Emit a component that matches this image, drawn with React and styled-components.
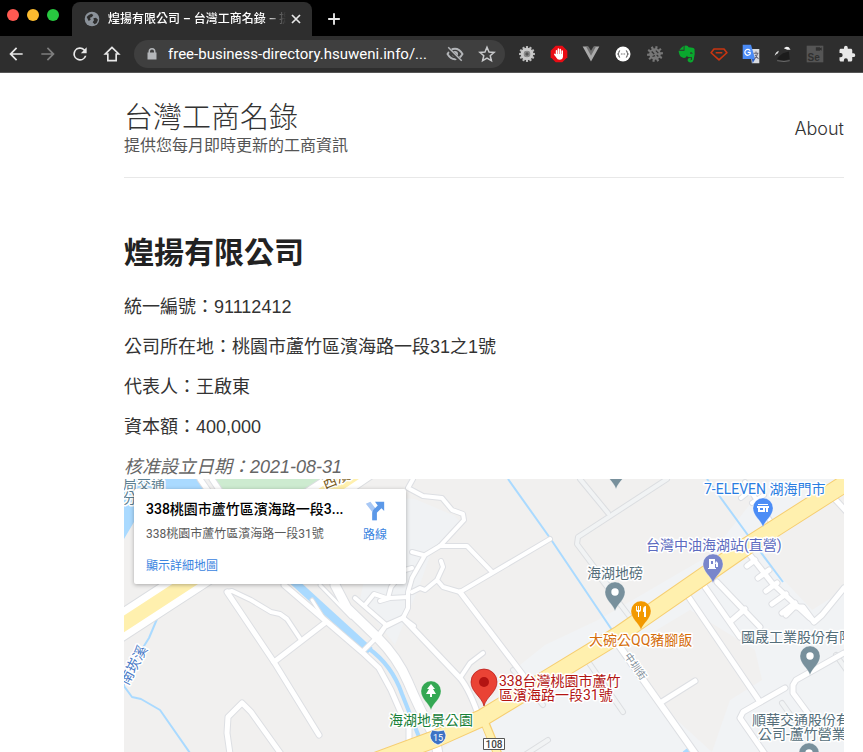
import React from "react";
import styled, { createGlobalStyle } from "styled-components";

const Global = createGlobalStyle`
  *, *::before, *::after { box-sizing: border-box; }
  html, body, #root { height: 100%; }
  body { margin: 0; background: #fff; overflow: hidden; }
`;

const UI_FONT = `Roboto, "Noto Sans CJK TC", sans-serif`;
const PAGE_FONT = `"Liberation Sans", "Noto Sans CJK TC", sans-serif`;

const Browser = styled.div`
  display: flex;
  flex-direction: column;
  height: 100vh;
  overflow: hidden;
  font-family: ${UI_FONT};
`;

/* ---------- tab strip ---------- */
const TabStrip = styled.div`
  display: flex;
  flex: none;
  height: 36px;
  background: #000;
`;
const WindowButtons = styled.div`
  display: flex;
  gap: 8px;
  width: 72px;
  padding: 9px 0 0 7px;
`;
const WindowButton = styled.button`
  width: 12px;
  height: 12px;
  padding: 0;
  border: 0;
  border-radius: 50%;
  background: ${(p) => p.$color};
`;
const Tab = styled.div`
  display: flex;
  align-items: center;
  width: 240px;
  height: 34px;
  margin-top: 2px;
  padding: 0 10px 0 12px;
  border-radius: 8px 8px 0 0;
  background: #2e2e2e;
  color: #fff;
`;
const TabTitle = styled.span`
  flex: 1;
  min-width: 0;
  margin: 0 4px 0 8px;
  overflow: hidden;
  white-space: nowrap;
  font-size: 12px;
  font-weight: 500;
  line-height: 18px;
  mask-image: linear-gradient(90deg, #000 88%, transparent);
`;
const IconButton = styled.button`
  display: flex;
  align-items: center;
  justify-content: center;
  flex: none;
  width: ${(p) => p.$size || 32}px;
  height: ${(p) => p.$size || 32}px;
  padding: 0;
  border: 0;
  background: none;
  color: ${(p) => (p.$dim ? "#7e7e7e" : "#e8e8e8")};
  svg { display: block; }
`;
const NewTab = styled(IconButton)`
  margin: 3px 0 0 6px;
`;

/* ---------- toolbar ---------- */
const Toolbar = styled.div`
  display: flex;
  flex: none;
  align-items: center;
  height: 37px;
  background: #2e2e2e;
  border-bottom: 1px solid #565656;
`;
const AddressBar = styled.label`
  display: flex;
  flex: 1;
  align-items: center;
  min-width: 0;
  height: 28px;
  margin: 0 6px;
  padding: 0 2px 0 12px;
  border-radius: 14px;
  background: #3f3f3f;
  color: #b4b6b9;
`;
const Url = styled.input`
  flex: 1;
  min-width: 0;
  margin-left: 10px;
  padding: 0;
  border: 0;
  outline: 0;
  background: none;
  color: #fff;
  font: 400 15px/20px ${UI_FONT};
`;
const Extensions = styled.div`
  display: flex;
  flex: none;
`;

/* ---------- page ---------- */
const Page = styled.div`
  flex: 1;
  min-height: 0;
  overflow: hidden;
  padding: 28px 19px 0 124px;
  background: #fff;
  color: #333;
  font-family: ${PAGE_FONT};
`;
const SiteHeader = styled.header`
  display: flex;
  align-items: center;
  justify-content: space-between;
  height: 77px;
  padding-bottom: 21px;
  border-bottom: 1px solid #e8e8e8;
`;
const SiteName = styled.div`
  color: #333;
  font-size: 29px;
  font-weight: 300;
  line-height: 34px;
`;
const Tagline = styled.div`
  color: #555;
  font-size: 16px;
  line-height: 22px;
`;
const NavLink = styled.a`
  color: #333;
  font: 300 18px/24px Inter, sans-serif;
  text-decoration: none;
`;
const Title = styled.h1`
  margin: 51px 0 16px;
  color: #222;
  font-size: 30px;
  font-weight: 700;
  line-height: 48px;
`;
const Fact = styled.p`
  margin: 0 0 12px;
  font-size: 18px;
  line-height: 28px;
`;
const Founded = styled.em`
  display: block;
  height: 26px;
  color: #666;
  font-size: 18px;
  line-height: 28px;
`;

/* ---------- map ---------- */
const MapFrame = styled.section`
  position: relative;
  height: 450px;
  overflow: hidden;
  background: #f1f0ef;
`;
const MapCanvas = styled.svg`
  display: block;
  width: 100%;
  height: 100%;
  font-family: ${UI_FONT};
`;
const PlaceCard = styled.div`
  position: absolute;
  top: 10px;
  left: 10px;
  display: flex;
  justify-content: space-between;
  width: 272px;
  height: 95px;
  padding: 9px 12px;
  border-radius: 2px;
  background: #fff;
  box-shadow: 0 1px 4px rgba(0, 0, 0, 0.3);
  font-family: ${UI_FONT};
  font-size: 12px;
`;
const PlaceInfo = styled.div`
  display: flex;
  flex-direction: column;
  width: 200px;
  white-space: nowrap;
`;
const PlaceName = styled.div`
  overflow: hidden;
  color: #000;
  font-size: 14px;
  font-weight: 500;
  line-height: 22px;
`;
const PlaceAddress = styled.div`
  margin: 6px 0 15px;
  color: #5b5b5b;
  line-height: 16px;
`;
const MapLink = styled.a`
  color: #3a84df;
  line-height: 18px;
  text-decoration: none;
`;
const Directions = styled(MapLink)`
  display: flex;
  flex-direction: column;
  align-items: center;
  gap: 4px;
  width: 38px;
  padding-top: 2px;
`;

const Label = styled.text`
  fill: ${(p) => p.$color};
  font-size: ${(p) => p.$size || 14}px;
  stroke: #fff;
  stroke-width: 3px;
  stroke-linejoin: round;
  paint-order: stroke;
`;

const whiteRoads = [
  ["M200 479 209 492M212 479 222 494", 5],
  ["M227 592 274 662 319 735", 5],
  ["M227 592 232 591 251 600 271 612 280 614 287 619 301 640", 4],
  ["M274 662 326 622", 5],
  ["M230 754 227 733 228 717 242 703 251 712 281 754", 5],
  ["M284 585 362 652 379 668 391 690 401 713 409 728 409 743", 5],
  ["M362 652 377 637 386 625 402 618", 4],
  ["M320 585 351 617M326 622 312 600", 3],
  ["M335 585 347 608 377 637Q398 658 408 682T435 738L438 754", 9],
  ["M355 598 385 624M365 605 374 594 386 598", 4],
  ["M413 479 408 488 423 496 442 498 452 510 463 514 464 520 440 546 425 555 412 578 408 592 408 608 403 618 385 627 379 636", 4],
  ["M440 546 467 546 492 572", 4],
  ["M550 539 460 592 443 587 437 580 443 567 441 561M437 580 425 590 420 588 412 592", 4],
  ["M460 592 523 675", 5],
  ["M403 618 460 678Q470 690 480 720", 5],
  ["M460 678 470 663 483 653", 4],
  ["M412 552 423 555M380 601 390 598 408 597M388 598 391 587 405 570 412 568", 4],
  ["M403 618 414 626", 4],
  ["M620 647 697 756", 6],
  ["M660 703 695 681", 5],
  ["M688 596 760 702", 5],
  ["M785 688 743 712 740 718 765 754", 5],
  ["M844 653 796 680 793 685 793 693 810 716", 5],
  ["M705 587 740 637M717 582 760 627M731 621 745 609", 5],
  ["M750 555 772 583 810 618M747 566 755 560M758 578 769 570M766 591 777 583M772 604 786 594M782 613 795 603", 5],
  ["M844 588 822 615 814 622 803 607 794 607 786 615", 5],
  ["M741 498 751 490 745 482M752 503 764 495M752 493 773 525", 4],
  ["M833 497 846 511", 5],
];
const greyRoads = [
  "M580 479 608 513M667 479 578 537 577 544 613 592M598 575 630 617",
  "M587 660 623 712M513 670 543 705M548 740 520 758",
  "M782 703 794 720M836 655 850 675",
];

function Roads() {
  return (
    <g fill="none" strokeLinecap="round" strokeLinejoin="round">
      {greyRoads.map((d) => <path key={d} d={d} stroke="#dcdee1" strokeWidth="6" />)}
      {greyRoads.map((d) => <path key={d + "f"} d={d} stroke="#f1f3f4" strokeWidth="4" />)}
      {whiteRoads.map(([d, w]) => <path key={d} d={d} stroke="#dddfe3" strokeWidth={w + 2} />)}
      {whiteRoads.map(([d, w]) => <path key={d + "f"} d={d} stroke="#fff" strokeWidth={w} />)}
    </g>
  );
}

function Pin({ x, y, color, children }) {
  return (
    <g transform={`translate(${x} ${y})`}>
      <path d="M0 19C-2 12-10 8-10 0A10 10 0 0 1 10 0C10 8 2 12 0 19Z" fill={color} stroke="#fff" strokeOpacity=".5" strokeWidth=".5" />
      {children || <circle r="3.7" fill="#fff" />}
    </g>
  );
}

function MapDrawing() {
  return (
    <MapCanvas viewBox="124 479 720 450" preserveAspectRatio="xMidYMin slice" role="img" aria-label="地圖">
      <path d="M124 479H844V930H124Z" fill="#f1f0ef" />
      <path d="M381 497 415 499 455 516 462 524 430 556 418 590 409 610 395 645 360 600Z" fill="#f0f2f4" />
      <path d="M600 619 710 555 770 479H844V485L767 538 844 520V930H500L440 752 470 725 520 665 545 645Z" fill="#f1f3f5" />
      <path d="M640 640 690 610 755 650 762 680 730 700 712 752 655 700 620 650Z" fill="#f1f0ef" />
      <path d="M765 535 844 500V590L812 610 760 555Z" fill="#f1f0ef" />
      <path d="M124 479H201L210 492 134 522 124 539Z" fill="#aadaff" />
      <path d="M215 479H325L300 495H224Z" fill="#cdebd0" />
      <g fill="none" stroke="#aadaff" strokeLinejoin="round">
        <path d="M158 610 157 619 149 638 124 678V686L132 697 141 699 160 710 190 753" strokeWidth="2" />
        <path d="M290 578 370 651" strokeWidth="8" />
        <path d="M368 648Q392 665 402 694L421 742" strokeWidth="4" />
        <path d="M508 479 550 538 612 630M707 479 750 538 783 582" strokeWidth="2" />
        <path d="M684 753 692 747" strokeWidth="4" />
      </g>
      <Roads />
      <g fill="none">
        <path d="M110 633 345 480 370 463" stroke="#dcdee1" strokeWidth="30" />
        <path d="M110 633 345 480 370 463" stroke="#fff" strokeWidth="28" />
        <path d="M110 633 345 480 370 463" stroke="#fff0ae" strokeWidth="14" />
        <path d="M483 718 499 757" stroke="#f6ce72" strokeWidth="9" />
        <path d="M370 763 435 739 482 718 620 634 747 546 860 474" stroke="#f6ce72" strokeWidth="18" />
        <path d="M370 763 435 739 482 718 620 634 747 546 860 474" stroke="#fff0ae" strokeWidth="16" />
        <path d="M481 714 499 757" stroke="#fff0ae" strokeWidth="7" />
      </g>

      <Label x="123" y="489" $color="#5c7f92">局交通</Label>
      <Label x="123" y="503" $color="#5c7f92">分</Label>
      <Label x="325" y="489" $color="#795a20" transform="rotate(-22 325 489)">西濱路</Label>
      <Label x="128" y="686" $color="#4879c6" transform="rotate(-62 128 686)">南崁溪</Label>
      <Label x="624" y="656" $color="#7b8a96" $size={10} transform="rotate(55 624 656)">中圳街</Label>

      <Pin x={616} y={470} color="#78909c" />
      <Pin x={763} y={508} color="#4c8df6">
        <path d="M-5-4H5V-3H-5ZM-6-2H6V0H5V4H-5V0H-6ZM-3 0V2H0V0ZM2 0V4H3V0Z" fill="#fff" fillRule="evenodd" />
      </Pin>
      <Pin x={713} y={564} color="#7986cb">
        <path d="M-4-5H2V4H3V5H-5V4H-4ZM-2-3V0H0V-3ZM3-3 5-1V3H3V0H2" fill="#fff" fillRule="evenodd" />
      </Pin>
      <Pin x={615} y={592} color="#78909c" />
      <Pin x={641} y={611} color="#f29900">
        <path d="M-5-5V-1Q-5 1-3 1V6H-2V1Q0 1 0-1V-5H-1V-1H-2V-5H-3V-1H-4V-5ZM5-5Q2-5 2-1V1H3V6H5Z" fill="#fff" />
      </Pin>
      <Pin x={810} y={656} color="#78909c" />
      <Pin x={809} y={753} color="#78909c" />
      <Pin x={431} y={691} color="#34a853">
        <path d="M0-7 4-2H2L5 3H1V6H-1V3H-5L-2-2H-4Z" fill="#fff" />
      </Pin>
      <path d="M484 706C482 697 471 692 471 682A13 13 0 0 1 497 682C497 692 486 697 484 706Z" fill="#ea4335" stroke="#b31412" strokeWidth=".7" />
      <circle cx="484" cy="682" r="5" fill="#b31412" />

      <Label x="704" y="494" $color="#2a7de1">7-ELEVEN 湖海門市</Label>
      <Label x="646" y="550" $color="#5c6bc0">台灣中油海湖站(直營)</Label>
      <Label x="587" y="578" $color="#546e7a">海湖地磅</Label>
      <Label x="589" y="645" $color="#d56e0c">大碗公QQ豬腳飯</Label>
      <Label x="741" y="642" $color="#546e7a">國晟工業股份有限公司</Label>
      <Label x="752" y="725" $color="#546e7a">順華交通股份有限</Label>
      <Label x="758" y="739" $color="#546e7a">公司-蘆竹營業所</Label>
      <Label x="389" y="725" $color="#188038">海湖地景公園</Label>
      <Label x="499" y="686" $color="#b31412">338台灣桃園市蘆竹</Label>
      <Label x="499" y="700" $color="#b31412">區濱海路一段31號</Label>

      <path d="M432 730Q438 732 444 730L446 735Q446 742 438 745Q430 742 430 735Z" fill="#3d73c5" stroke="#fff" strokeWidth=".7" />
      <text x="438" y="741" fontSize="9" fill="#fff" textAnchor="middle">15</text>
      <path d="M483.5 738.5H504.5V749.5H483.5Z" fill="#fff" stroke="#555" />
      <text x="494" y="748" fontSize="10" fontWeight="500" fill="#444" textAnchor="middle">108</text>
    </MapCanvas>
  );
}

/* ---------- icons ---------- */
const Icon = ({ size = 20, children, ...rest }) => (
  <svg width={size} height={size} viewBox="0 0 24 24" fill="currentColor" aria-hidden="true" {...rest}>{children}</svg>
);
const GearTeeth = ({ n, color }) =>
  Array.from({ length: n }, (_, i) => (
    <path key={i} d="M10.7 2.500H13.300V7H10.700Z" fill={color} transform={`rotate(${(i * 360) / n} 12 12)`} />
  ));

const extensions = [
  ["設定", <Icon><GearTeeth n={12} color="#bdbdbd" /><circle cx="12" cy="12" r="5.5" fill="none" stroke="#c9c9c9" strokeWidth="4" /><circle cx="12" cy="12" r="4" fill="#8a8a8a" /><circle cx="12" cy="12" r="2" fill="#555" /></Icon>],
  ["廣告攔截", <Icon><path d="M8 2H16L22 8V16L16 22H8L2 16V8Z" fill="#e90c14" /><g fill="none" stroke="#fff" strokeWidth="1.8" strokeLinecap="round"><path d="M9 13V8M11.300 12V6M13.600 12V6.500M15.900 13V8.500M9 15 7 12.500" /></g><path d="M8.100 12H16.800V15Q16.500 19 12.500 19 10 19 8.500 16Z" fill="#fff" /></Icon>],
  ["Vue", <Icon><path d="M2 3H8L12 10 16 3H22L12 21Z" fill="#aaa" /><path d="M6 3H9L12 8 15 3H18L12 14Z" fill="#707070" /></Icon>],
  ["JSON", <Icon><circle cx="12" cy="12" r="9" fill="#fff" /><path d="M8.500 8Q7 8 7 10T5.500 12Q7 12 7 14T8.500 16M15.500 8Q17 8 17 10T18.500 12Q17 12 17 14T15.500 16M9.500 12H10.500M11.500 12H12.500M13.500 12H14.500" fill="none" stroke="#444" strokeWidth="1.2" /></Icon>],
  ["除錯", <Icon><g transform="rotate(12 12 12)"><GearTeeth n={10} color="#777" /></g><circle cx="12" cy="12" r="7" fill="#777" /><path d="M8 9 11 12M13 8 16 11M9 15 12 14M14 13 16 15" stroke="#333" strokeWidth="1.5" /></Icon>],
  ["Evernote", <Icon><path d="M8 2V7H3Q5 4 8 2ZM9 2Q13 1 14 4 20 4 21 6 22 12 20 19 19 23 15 22 12 21 13 18 14 16 17 17V19H15Q16 20 18 19V16Q12 16 12 14 10 18 6 16 3 15 2 9V8H9Z" fill="#0aa82e" /><path d="M16 10Q18 9 19 12 17 11 16 12Z" fill="#2e2e2e" /></Icon>],
  ["Ruby", <Icon><path d="M6 6H18L21.500 10.500 12 19 2.500 10.500ZM8 10.500H16" fill="none" stroke="#c83511" strokeWidth="2" strokeLinejoin="round" /></Icon>],
  ["翻譯", <Icon><path d="M11 6H22V23H13Z" fill="#d8dbe0" /><path d="M2 1H12L17 18H2Z" fill="#4b8bf5" /><path d="M11 8A3.500 3.500 0 1 0 11 12V10H8" fill="none" stroke="#fff" strokeWidth="1.5" /><path d="M15 11H21M18 9V11M20 11Q19 16 16 18M17 13 21 18" stroke="#667" strokeWidth="1.3" fill="none" /><path d="M13 18H17L14 23Z" fill="#2b5fc5" /></Icon>],
  ["帽子", <Icon><path d="M2 14Q3 9 7 8L6 11Q4 12 2 14Z" fill="#ddd" /><path d="M13 5Q16 2 19 4L21 7 17 7Z" fill="#f4f4f4" /><path d="M5 18Q7 14 12 11L19 9 20 18Q12 21 5 18Z" fill="#1c1c1c" /><path d="M5 20Q14 22 20 20" stroke="#777" fill="none" /></Icon>],
  ["Selenium", <Icon><path d="M2 2H22V22H2Z" fill="#555" /><path d="M13 4H18V5L20 4V8L18 7V8H13Z" fill="#303030" /><text x="3" y="20" fontSize="12" fontWeight="700" fill="#303030">Se</text></Icon>],
  ["擴充功能", <Icon size={18}><path d="M20.500 11H19V7c0-1.100-.9-2-2-2h-4V3.500a2.500 2.500 0 0 0-5 0V5H4c-1.100 0-2 .9-2 2v3.800h1.500a2.700 2.700 0 0 1 0 5.400H2V20c0 1.100.9 2 2 2h3.800v-1.500a2.700 2.700 0 0 1 5.400 0V22H17c1.100 0 2-.9 2-2v-4h1.500a2.500 2.500 0 0 0 0-5Z" /></Icon>],
];

export default function App() {
  return (
    <Browser>
      <Global />
      <TabStrip>
        <WindowButtons>
          <WindowButton $color="#ff5a52" aria-label="關閉" />
          <WindowButton $color="#fdbc2f" aria-label="縮小" />
          <WindowButton $color="#28c840" aria-label="放大" />
        </WindowButtons>
        <Tab>
          <Icon size={16}><circle cx="12" cy="12" r="11" fill="#8b929a" /><path d="M4 9Q7 5 11 4L14 6 12 9 9 10 10 13 7 15ZM14 11 18 10 21 13Q20 18 16 20L13 17 15 14Z" fill="#2e2e2e" /></Icon>
          <TabTitle>煌揚有限公司 – 台灣工商名錄 – 提供您每月即時更新</TabTitle>
          <IconButton $size={12} aria-label="關閉分頁">
            <Icon size={12}><path d="M4 4 20 20M20 4 4 20" stroke="currentColor" strokeWidth="3.5" /></Icon>
          </IconButton>
        </Tab>
        <NewTab aria-label="新增分頁">
          <Icon size={14}><path d="M12 2V22M2 12H22" stroke="currentColor" strokeWidth="3.2" /></Icon>
        </NewTab>
      </TabStrip>
      <Toolbar>
        <IconButton aria-label="上一頁"><Icon><path d="M20 11H7.830l5.590-5.590L12 4l-8 8 8 8 1.410-1.410L7.830 13H20z" /></Icon></IconButton>
        <IconButton $dim aria-label="下一頁"><Icon><path d="m12 4-1.410 1.410L16.170 11H4v2h12.170l-5.580 5.590L12 20l8-8z" /></Icon></IconButton>
        <IconButton aria-label="重新載入"><Icon><path d="M17.650 6.350A8 8 0 1 0 19.730 14h-2.080A6 6 0 1 1 12 6c1.660 0 3.140.69 4.220 1.780L13 11h7V4z" /></Icon></IconButton>
        <IconButton aria-label="首頁"><Icon><path d="M12 4 4 12H7V20H17V12H20Z" fill="none" stroke="currentColor" strokeWidth="2" /></Icon></IconButton>
        <AddressBar>
          <Icon size={12}><path d="M5 9V7A7 7 0 0 1 19 7V9H21V23H3V9ZM8 9H16V7A4 4 0 0 0 8 7Z" fillRule="evenodd" /></Icon>
          <Url aria-label="網址" defaultValue="free-business-directory.hsuweni.info/..." />
          <IconButton as="span" $size={32}>
            <Icon size={18} color="#b4b6b9"><path d="M2 12Q6 5 12 5T22 12Q18 19 12 19T2 12Z" fill="none" stroke="currentColor" strokeWidth="2.5" /><circle cx="12" cy="12" r="4" /><path d="M3 5 19 21" stroke="#3f3f3f" strokeWidth="5" /><path d="M3 3 21 21" stroke="currentColor" strokeWidth="2" /></Icon>
          </IconButton>
          <IconButton $size={32} aria-label="加入書籤">
            <Icon size={18} color="#c8c9cb"><path d="m12 3 2.700 6.300 6.800.6-5.200 4.500 1.600 6.600-5.900-3.500-5.900 3.500 1.600-6.600-5.200-4.500 6.800-.6Z" fill="none" stroke="currentColor" strokeWidth="2" /></Icon>
          </IconButton>
        </AddressBar>
        <Extensions>
          {extensions.map(([name, icon]) => (
            <IconButton key={name} aria-label={name}>{icon}</IconButton>
          ))}
        </Extensions>
      </Toolbar>

      <Page>
        <SiteHeader>
          <div>
            <SiteName>台灣工商名錄</SiteName>
            <Tagline>提供您每月即時更新的工商資訊</Tagline>
          </div>
          <NavLink href="#about">About</NavLink>
        </SiteHeader>
        <main>
          <Title>煌揚有限公司</Title>
          <Fact>統一編號：91112412</Fact>
          <Fact>公司所在地：桃園市蘆竹區濱海路一段31之1號</Fact>
          <Fact>代表人：王啟東</Fact>
          <Fact>資本額：400,000</Fact>
          <Founded>核准設立日期：2021-08-31</Founded>
          <MapFrame>
            <MapDrawing />
            <PlaceCard>
              <PlaceInfo>
                <PlaceName>338桃園市蘆竹區濱海路一段3...</PlaceName>
                <PlaceAddress>338桃園市蘆竹區濱海路一段31號</PlaceAddress>
                <MapLink href="#map">顯示詳細地圖</MapLink>
              </PlaceInfo>
              <Directions href="#route">
                <Icon size={22}><path d="M2 4 7 2 14 11V22H9V13Z" fill="#a8c8f5" /><path d="M9 22V14Q9 11 12 9L15 6 12 2H22V12L19 9 14 14V22Z" fill="#5b98e8" /></Icon>
                路線
              </Directions>
            </PlaceCard>
          </MapFrame>
        </main>
      </Page>
    </Browser>
  );
}
